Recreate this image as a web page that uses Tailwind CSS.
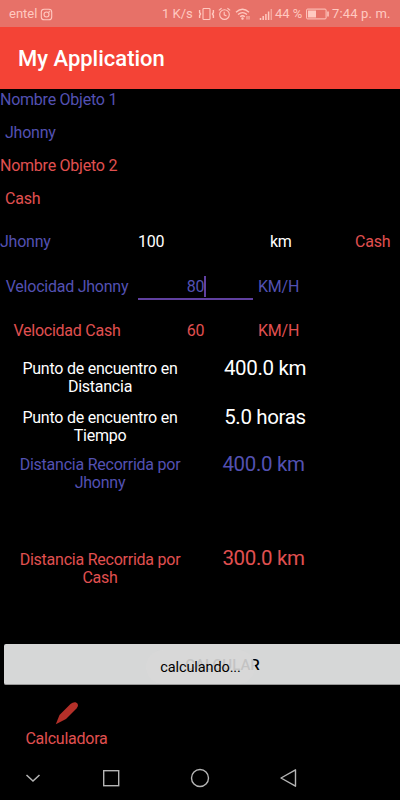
<!DOCTYPE html>
<html lang="es">
<head>
<meta charset="utf-8">
<title>My Application</title>
<script src="https://cdn.jsdelivr.net/npm/@tailwindcss/browser@4"></script>
</head>
<body class="bg-black">
<div class="w-[400px] h-[800px] overflow-hidden bg-black font-[Roboto,sans-serif] text-[16px] tracking-[-0.24px] leading-[18px] text-[#e05050] flex flex-col">
  <header class="shrink-0 tracking-normal">
    <div class="h-[27px] bg-[#e77168] text-[#ffc9c0] text-[13px] flex items-center pl-[9px] pt-px whitespace-nowrap">
      <span class="w-[30px]">entel</span>
      <svg class="ml-[1px] w-[13px] h-[13px]" viewBox="0 0 13 13" fill="none" stroke="currentColor" stroke-width="1.1"><rect x="1.3" y="1.3" width="10.4" height="10.4" rx="2.8"/><circle cx="6.5" cy="6.5" r="2.5"/><circle cx="9.4" cy="3.6" r=".3"/></svg>
      <span class="ml-[109px] w-[36px]">1 K/s</span>
      <svg class="w-[17px] h-[14px]" viewBox="0 0 17 14" fill="none" stroke="currentColor" stroke-width="1.1"><rect x="5" y="1.5" width="7" height="11" rx=".8"/><path d="M1.600 3v2.500l1 1.500-1 1.500v2.500M15.400 3v2.500l-1 1.500 1 1.500v2.500" stroke-width="1.400"/></svg>
      <svg class="ml-[3px] w-[13px] h-[14px]" viewBox="0 0 13 14" fill="none" stroke="currentColor" stroke-width="1.1"><circle cx="6.5" cy="7.6" r="4.8"/><path d="M6.2 4.8v3l2.3 1.2M.8 3.4 3.6 1.2M12.2 3.4 9.4 1.2"/></svg>
      <svg class="ml-[4px] w-[16px] h-[14px]" viewBox="0 0 16 14" fill="none" stroke="currentColor" stroke-width="1.3"><path d="M1 5.2Q7.5-.8 14 5.2M3 7.6q4.500-4 9 0M5.200 9.800q2.300-2 4.600 0"/><circle cx="7.500" cy="11.600" r=".6" fill="currentColor"/><path d="M12 9v3.500M14 9v3.500" stroke-width=".9"/></svg>
      <svg class="ml-[8px] w-[14px] h-[13px]" viewBox="0 0 14 13" fill="none" stroke="currentColor" stroke-width="1.500"><path d="M1.500 12v-2M4.200 12V8M6.900 12V6M9.600 12V3.500"/><path d="M12.300 12V1" opacity=".6"/></svg>
      <span class="ml-[2px] w-[31px]">44 %</span>
      <svg class="w-[24px] h-[12px]" viewBox="0 0 24 12"><rect x=".6" y="1.100" width="19.500" height="9.800" rx="1" fill="none" stroke="currentColor"/><rect x="2" y="2.500" width="8" height="7" fill="currentColor"/><path d="M22 3.500v5" stroke="currentColor" stroke-width="1.500"/></svg>
      <span class="ml-[2px] tracking-[0.15px]">7:44 p. m.</span>
    </div>
    <h1 class="h-[62px] bg-[#f44336] text-white text-[22px] font-medium flex items-center pl-[18px] pt-[1px]">My Application</h1>
  </header>

  <main class="shrink-0">
    <div class="h-[22px] flex items-center text-[#5351b2]">Nombre Objeto 1</div>
    <div class="h-[43px] flex items-center pl-[5px] text-[#5351b2]">Jhonny</div>
    <div class="h-[23px] flex items-center">Nombre Objeto 2</div>
    <div class="h-[43px] flex items-center pl-[5px]">Cash</div>

    <div class="h-[44px] flex items-center">
      <span class="w-[138px] text-[#5351b2]">Jhonny</span>
      <span class="w-[132px] text-white">100</span>
      <span class="w-[85px] text-white">km</span>
      <span>Cash</span>
    </div>
    <div class="h-[45px] flex items-center text-[#5351b2]">
      <span class="w-[134px] text-center">Velocidad Jhonny</span>
      <div class="ml-[4px] w-[115px] h-[26px] mt-[1px] border-b-2 border-[#6040a0] flex items-center justify-center">
        <span class="ml-[2px] mt-[2px]">80</span><i class="w-[2px] h-[21px] bg-[#6040a0]"></i>
      </div>
      <span class="ml-[5px]">KM/H</span>
    </div>
    <div class="h-[44px] flex items-center">
      <span class="w-[134px] text-center">Velocidad Cash</span>
      <span class="ml-[4px] w-[115px] text-center">60</span>
      <span class="ml-[5px]">KM/H</span>
    </div>

    <div class="h-[49px] pt-[7px] flex items-start text-white">
      <p class="w-[200px] text-center">Punto de encuentro en<br>Distancia</p>
      <p class="-mt-px w-[130px] text-center text-[20.500px] tracking-[-0.35px]">400.0 km</p>
    </div>
    <div class="h-[47px] pt-[7px] flex items-start text-white">
      <p class="w-[200px] text-center">Punto de encuentro en<br>Tiempo</p>
      <p class="-mt-px w-[130px] text-center text-[20.500px] tracking-[-0.35px]">5.0 horas</p>
    </div>
    <div class="h-[95px] pt-[7px] flex items-start text-[#5351b2]">
      <p class="w-[200px] text-center">Distancia Recorrida por<br>Jhonny</p>
      <p class="-mt-px w-[127px] text-center text-[20.500px] tracking-[-0.35px]">400.0 km</p>
    </div>
    <div class="h-[100px] pt-[7px] flex items-start">
      <p class="w-[200px] text-center">Distancia Recorrida por<br>Cash</p>
      <p class="-mt-[2px] w-[127px] text-center text-[20.500px] tracking-[-0.35px]">300.0 km</p>
    </div>

    <div class="relative ml-[4px] h-[41px] tracking-normal">
      <button class="w-[437px] h-[41px] rounded-[2px] bg-[#d6d7d7] text-black text-[15px] font-medium border-b border-[#999] pt-[2px]">CALCULAR</button>
      <div class="absolute left-[142px] top-[6px] w-[109px] h-[34px] rounded-[17px] bg-[#d8d8d8]/90 text-black text-[14.500px] tracking-[-0.1px] flex items-center justify-center pt-px">calculando...</div>
    </div>
    <div class="w-[133px] h-[70px] pt-[16px] flex flex-col items-center">
      <svg class="w-[24px] h-[24px]" viewBox="0 0 24 24" fill="#b43029"><path d="M.8 23.200 4.500 14 15.500 3Q18 .8 20.500 1.200 22.800 1.800 23 4 23 5.500 21.500 7.500L11 18Z"/></svg>
      <span class="mt-[5px]">Calculadora</span>
    </div>
  </main>

  <nav class="h-[45px] shrink-0 flex items-center pl-[25px] text-[#b5b5b5]">
    <svg class="w-[16px] h-[20px]" viewBox="0 0 16 20" fill="none" stroke="currentColor" stroke-width="1.500"><path d="m1.500 7 6.500 6 6.500-6"/></svg>
    <svg class="ml-[60px] w-[20px] h-[20px]" viewBox="0 0 20 20" fill="none" stroke="currentColor" stroke-width="1.400"><rect x="2.700" y="2.700" width="15" height="15"/></svg>
    <svg class="ml-[69px] w-[20px] h-[20px]" viewBox="0 0 20 20" fill="none" stroke="currentColor" stroke-width="1.400"><circle cx="10" cy="10" r="8.500"/></svg>
    <svg class="ml-[69px] w-[20px] h-[20px]" viewBox="0 0 20 20" fill="none" stroke="currentColor" stroke-width="1.400" stroke-linejoin="round"><path d="M16.500 1.800v16.400L2 10Z"/></svg>
  </nav>
</div>
</body>
</html>
